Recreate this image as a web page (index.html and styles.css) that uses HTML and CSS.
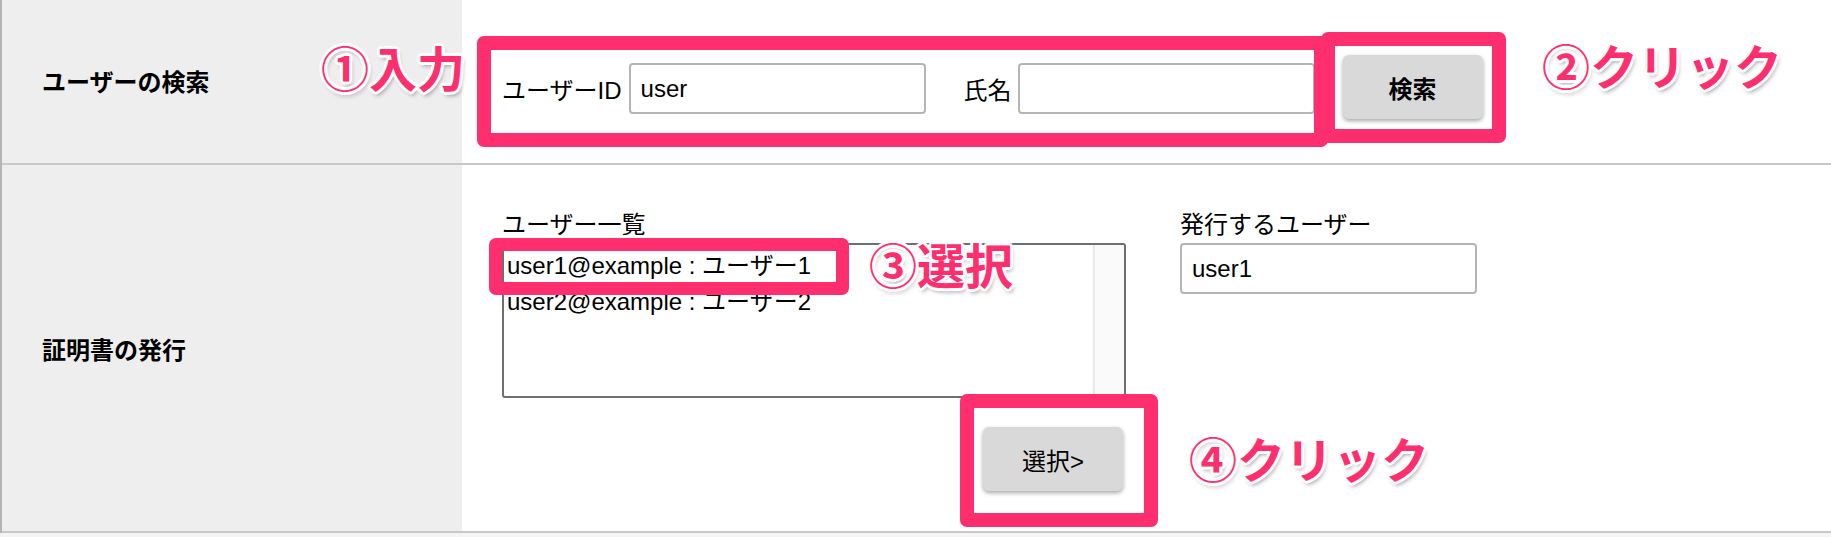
FILE: index.html
```html
<!DOCTYPE html>
<html lang="ja">
<head>
    <meta charset="UTF-8">
    <meta name="viewport" content="width=device-width, initial-scale=1.0">
    <title>証明書の発行</title>
    <link rel="stylesheet" href="styles.css">
</head>
<body>
    <div class="form-table">
        <div class="form-row row-search">
            <div class="row-label">ユーザーの検索</div>
            <div class="row-body">
                <span class="field-label">ユーザーID</span>
                <input class="text-input" type="text" value="user">
                <span class="field-label name-label">氏名</span>
                <input class="text-input" type="text" value="">
                <button class="btn btn-search">検索</button>
            </div>
        </div>

        <div class="form-row row-issue">
            <div class="row-label">証明書の発行</div>
            <div class="row-body">
                <div class="list-col">
                    <div class="col-label">ユーザー一覧</div>
                    <div class="listbox">
                        <div class="listbox-items">
                            <div class="listbox-option">user1@example : ユーザー1</div>
                            <div class="listbox-option">user2@example : ユーザー2</div>
                        </div>
                        <div class="listbox-track"></div>
                    </div>
                    <button class="btn btn-select">選択&gt;</button>
                </div>
                <div class="issue-col">
                    <div class="col-label">発行するユーザー</div>
                    <input class="text-input" type="text" value="user1">
                </div>
            </div>
        </div>

        <!-- annotations -->
        <div class="mark mark-input"></div>
        <div class="mark mark-search"></div>
        <div class="mark mark-option"></div>
        <div class="mark mark-select"></div>
        <div class="note note-1">①入力</div>
        <div class="note note-2">②クリック</div>
        <div class="note note-3">③選択</div>
        <div class="note note-4">④クリック</div>
    </div>
</body>
</html>
```

FILE: styles.css
```css
body {
    margin: 0;
    font-family: "Liberation Sans", "Noto Sans CJK JP", sans-serif;
    background-color: #f4f4f4;
    color: #000;
}
.form-table {
    position: relative;
    background-color: white;
    border-left: 2px solid #b4b4b4;
}
.form-row {
    display: flex;
    border-bottom: 2px solid #c8c8c8;
}
.row-label {
    width: 420px;
    padding-left: 40px;
    display: flex;
    align-items: center;
    background-color: #eeeeee;
    font-size: 24px;
    font-weight: bold;
}
.row-body {
    flex: 1;
    display: flex;
    padding-left: 40px;
}
.row-search {
    height: 163px;
}
.row-search .row-body {
    align-items: center;
    padding-top: 14px;
}
.row-search .row-label {
    padding-bottom: 2px;
}
.row-issue .row-body {
    align-items: flex-start;
    padding-top: 45px;
    padding-bottom: 40px;
}
.field-label {
    font-size: 24px;
    margin-right: 7px;
}
.name-label {
    margin-left: 38px;
    margin-right: 6px;
}
.text-input {
    box-sizing: border-box;
    width: 297px;
    height: 51px;
    border: 2px solid #b4b4b4;
    border-radius: 4px;
    padding: 0 10px;
    font-family: inherit;
    font-size: 24px;
    color: #000;
    outline: none;
}
.btn {
    width: 140px;
    height: 64px;
    border: none;
    border-radius: 6px;
    background-color: #d9d9d9;
    box-shadow: 0 2px 4px rgba(0,0,0,0.35);
    font-family: inherit;
    font-size: 24px;
    color: #000;
    cursor: pointer;
}
.btn-search {
    margin-left: 28px;
    margin-top: -3px;
    font-weight: bold;
}
.list-col {
    display: flex;
    flex-direction: column;
    width: 624px;
}
.col-label {
    font-size: 24px;
    line-height: 30px;
    margin-bottom: 3px;
}
.listbox {
    box-sizing: border-box;
    display: flex;
    height: 155px;
    border: 2px solid #6f6f6f;
    border-radius: 3px;
}
.listbox-items {
    flex: 1;
    padding: 3px 3px 0;
}
.listbox-option {
    font-size: 24px;
    line-height: 36px;
    white-space: nowrap;
}
.listbox-track {
    width: 29px;
    background-color: #fafafa;
    border-left: 2px solid #e8e8e8;
}
.btn-select {
    align-self: flex-end;
    margin-top: 29px;
    margin-right: 3px;
}
.issue-col {
    margin-left: 54px;
}

/* annotations */
.mark {
    position: absolute;
    box-sizing: border-box;
    border: 14px solid #ff2e6e;
    border-radius: 7px;
}
.mark-input { left: 475px; top: 36px; width: 851px; height: 111px; }
.mark-search { left: 1319px; top: 32px; width: 185px; height: 111px; }
.mark-option { left: 487px; top: 238px; width: 360px; height: 57px; border-width: 13px; }
.mark-select { left: 958px; top: 394px; width: 198px; height: 133px; }
.note {
    position: absolute;
    font-size: 48px;
    line-height: 48px;
    font-weight: bold;
    color: #ff2e6e;
    white-space: nowrap;
    text-shadow:
        3px 0 #fff, -3px 0 #fff, 0 3px #fff, 0 -3px #fff,
        2px 2px #fff, -2px 2px #fff, 2px -2px #fff, -2px -2px #fff,
        2px 4px 4px rgba(0,0,0,0.35);
}
.note-1 { left: 319px; top: 47px; }
.note-2 { left: 1540px; top: 45px; }
.note-3 { left: 867px; top: 244px; }
.note-4 { left: 1187px; top: 438px; }
```
